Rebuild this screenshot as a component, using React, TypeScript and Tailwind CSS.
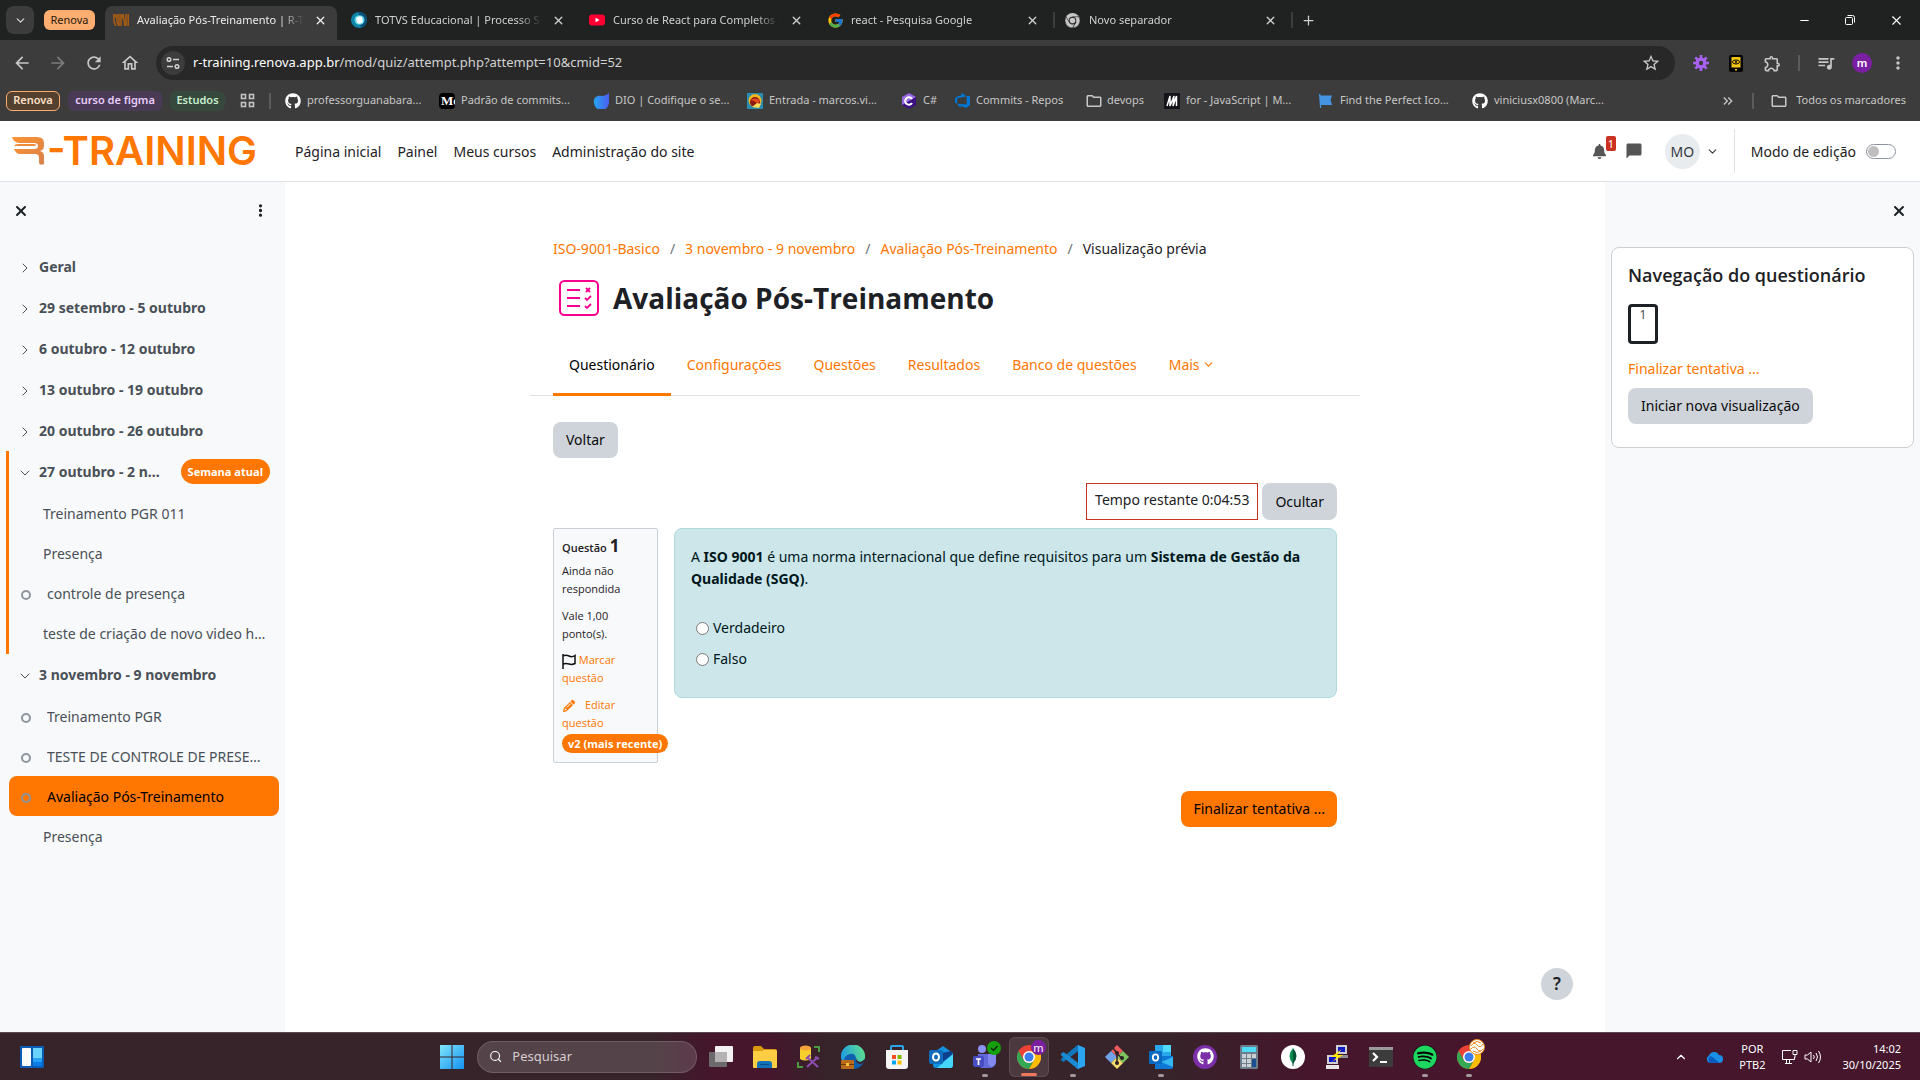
import React from "react";
import { ChevronDown, ChevronRight, X, Plus, Minus, Search } from "lucide-react";
import {
  MdArrowBack,
  MdArrowForward,
  MdRefresh,
  MdOutlineHome,
  MdStarBorder,
  MdOutlineExtension,
  MdQueueMusic,
  MdMoreVert,
  MdChatBubble,
  MdOutlineFolder,
  MdKeyboardDoubleArrowRight,
} from "react-icons/md";
import { FaBell, FaGithub, FaPencil, FaXmark, FaEllipsisVertical, FaSpotify } from "react-icons/fa6";
import { FcGoogle } from "react-icons/fc";
import { VscAzureDevops } from "react-icons/vsc";

/* ---------- Small drawings ---------- */

function ChromeLogo({ size = 24, mono = false }: { size?: number; mono?: boolean }) {
  const c = mono ? ["#c7c7c7", "#c7c7c7", "#c7c7c7"] : ["#ea4335", "#fbbc04", "#34a853"];
  const edge = mono ? "#202220" : "none";
  return (
    <svg width={size} height={size} viewBox="0 0 24 24" aria-hidden="true">
      <circle cx="12" cy="12" r="12" fill={c[0]} />
      <path d="M12 6h10.4A12 12 0 0 1 12 24l5.2-9z" fill={c[1]} stroke={edge} />
      <path d="M1.6 6 6.8 15a6 6 0 0 0 10.4 0L12 24A12 12 0 0 1 1.6 6z" fill={c[2]} stroke={edge} />
      <circle cx="12" cy="12" r="6" fill={mono ? "#202220" : "#fff"} />
      <circle cx="12" cy="12" r="4.5" fill={mono ? "#c7c7c7" : "#3b7ded"} />
    </svg>
  );
}

function TuneIcon() {
  return (
    <svg width="14" height="14" viewBox="0 0 14 14" fill="none" stroke="#d0d0d0" strokeWidth="1.5" aria-hidden="true">
      <circle cx="3" cy="3.5" r="1.8" />
      <path d="M7 3.5h6M1 10.5h6" />
      <circle cx="11" cy="10.5" r="1.8" />
    </svg>
  );
}

function RenovaFavicon() {
  return (
    <svg width="16" height="12" viewBox="0 0 16 12" fill="none" stroke="#a75a12" strokeWidth="1.6" aria-hidden="true">
      <path d="M1 0v8l2 4M4 0v8l2 4V0M8 0v12M10 0l2 12M13 0v12M15.2 0v12M1 0l3 4M8 0l3 6" />
    </svg>
  );
}

function TotvsIcon() {
  return (
    <svg width="16" height="16" viewBox="0 0 16 16" aria-hidden="true">
      <circle cx="8" cy="8" r="8" fill="#0d84a8" />
      <path d="M8 0a8 8 0 0 1 8 8 8 8 0 0 1-5 7.4L8 12z" fill="#0a4f7a" />
      <ellipse cx="8.5" cy="8" rx="5" ry="4.8" fill="#5cd3ea" />
      <path d="M5 6q3-3 6-1l1 5q-3 3-6 1z" fill="#f2fdff" />
    </svg>
  );
}

function YoutubeIcon() {
  return (
    <svg width="16" height="16" viewBox="0 0 16 16" aria-hidden="true">
      <rect x="0" y="2.5" width="16" height="11" rx="3" fill="#ff0033" />
      <path d="M6.5 5.7v4.6l4-2.3z" fill="#fff" />
    </svg>
  );
}

function AppsIcon() {
  return (
    <svg width="15" height="15" viewBox="0 0 15 15" fill="none" stroke="#c7c7c7" strokeWidth="1.6" aria-hidden="true">
      <path d="M1.5 1.5h4v4h-4zM9.5 1.5h4v4h-4zM1.5 9.5h4v4h-4zM9.5 9.5h4v4h-4z" />
    </svg>
  );
}

function MediumIcon() {
  return (
    <span className="flex size-4 items-center overflow-hidden rounded-sm bg-black pl-0.5 font-['Liberation_Serif',serif] text-[13px] font-bold text-white">
      Me
    </span>
  );
}

function DioIcon() {
  return (
    <svg width="16" height="16" viewBox="0 0 16 16" aria-hidden="true">
      <defs>
        <linearGradient id="dio" x1="0" x2="1">
          <stop offset="0" stopColor="#25a5f2" />
          <stop offset="1" stopColor="#4a5ff0" />
        </linearGradient>
      </defs>
      <path d="M16 0v9a7.500 7.500 0 0 1-15 1C0 5 4 2 8 3c3 .5 5-1 8-3z" fill="url(#dio)" />
    </svg>
  );
}

function MailIcon() {
  return (
    <svg width="16" height="16" viewBox="0 0 16 16" aria-hidden="true">
      <rect width="16" height="16" fill="#2b8cae" />
      <circle cx="8" cy="7.5" r="6.5" fill="#f5b51c" />
      <circle cx="8" cy="9" r="5" fill="#8c1c10" />
      <path d="M3 7q5-3 10 0l-2 4-4-3z" fill="#e24a1b" />
      <path d="M5 14l5-4 4 1-2 4z" fill="#f7dc59" />
    </svg>
  );
}

function CSharpIcon() {
  return (
    <svg width="16" height="16" viewBox="0 0 16 16" aria-hidden="true">
      <path d="M8 0l7 4v8l-7 4-7-4V4z" fill="#3a1083" />
      <path d="M8 0l7 4L1 12V4z" fill="#9a6be0" />
      <path d="M11 6a3.700 3.700 0 1 0 0 4" fill="none" stroke="#fff" strokeWidth="2" />
    </svg>
  );
}

function MdnIcon() {
  return (
    <svg width="16" height="16" viewBox="0 0 16 16" aria-hidden="true">
      <rect width="16" height="16" fill="#15141a" />
      <path d="M3 13 6 3v10l4-10-1 10 3.500-10v10" fill="none" stroke="#fff" strokeWidth="1.5" />
    </svg>
  );
}

function FlagFavicon() {
  return (
    <svg width="16" height="16" viewBox="0 0 16 16" aria-hidden="true">
      <path d="M1 1h1.500v1.500H14L12.500 7 14 12H3v3H2z" fill="#4594e4" />
    </svg>
  );
}

function GearExtension() {
  return (
    <svg width="16" height="16" viewBox="0 0 16 16" aria-hidden="true">
      <path d="M8 0v16M0 8h16M2.300 2.300l11.400 11.400M13.700 2.300 2.300 13.700" stroke="#a862f2" strokeWidth="2.6" />
      <circle cx="8" cy="8" r="5.5" fill="#a862f2" />
      <circle cx="8" cy="8" r="2.2" fill="#3c3c3c" />
    </svg>
  );
}

function PhoneExtension() {
  return (
    <svg width="14" height="17" viewBox="0 0 14 17" aria-hidden="true">
      <rect width="14" height="17" rx="2" fill="#000" />
      <rect x="2.5" y="2" width="9" height="10.5" fill="#f3c414" />
      <ellipse cx="7" cy="7" rx="3.5" ry="2" fill="none" stroke="#000" />
      <circle cx="7" cy="7" r="1" />
      <rect x="6" y="14" width="2" height="1.5" fill="#f3c414" />
    </svg>
  );
}

function RMark() {
  return (
    <svg width="33" height="30" viewBox="0 0 33 30" fill="none" aria-hidden="true">
      <defs>
        <linearGradient id="rmark" x1="0" y1="0" x2="1" y2="1">
          <stop offset="0" stopColor="#fd9433" />
          <stop offset="1" stopColor="#d9814a" />
        </linearGradient>
      </defs>
      <path d="M0 1h25q7 0 7 6v3q0 4-4 5 4 1 4 5v8q-5 2-5-2v-4q0-4-4-4H8q-4 0-6-5h20q4 0 4-3t-4-3H8Q2 7 0 1z" fill="url(#rmark)" />
      <path d="M2 10q1-2 4-2h16q2 0 2 1t-2 1z" fill="#f08b38" />
    </svg>
  );
}

function QuizIcon() {
  return (
    <svg width="40" height="36" viewBox="0 0 40 36" fill="none" stroke="#f70090" strokeWidth="2" aria-hidden="true">
      <rect x="1" y="1" width="38" height="34" rx="4.5" />
      <path d="M8 10h13M8 18h13M8 26h13" />
      <path d="M27 8l4 4M31 8l-4 4M26 18l2 2 4-4M26 26l2 2 4-4" strokeWidth="1.8" />
    </svg>
  );
}

function FlagOutline() {
  return (
    <svg className="inline-block" width="14" height="15" viewBox="0 0 14 15" fill="none" stroke="#111" strokeWidth="1.5" aria-hidden="true">
      <path d="M1 0v15M1 2q3-1.500 6 0t6-.5v8q-3 1.500-6 .5t-6 0" />
    </svg>
  );
}

/* ---------- Taskbar drawings ---------- */

const TaskView = () => (
  <svg width="24" height="24" viewBox="0 0 24 24">
    <rect x="6" y="1" width="18" height="16" rx="1" fill="#f2f2f2" />
    <rect x="0" y="7" width="18" height="15" rx="1" fill="#6d6a6b" />
    <path d="M6 7h12v10H6z" fill="#b5b3b4" />
  </svg>
);
const Explorer = () => (
  <svg width="24" height="24" viewBox="0 0 24 24">
    <path d="M0 3q0-2 2-2h6l3 3h11q2 0 2 2v4H0z" fill="#d99a10" />
    <path d="M0 6h9l2-1h12l1 1v16q0 1-1 1H1q-1 0-1-1z" fill="#fdcd43" />
    <path d="M4 23v-4q0-3 3-3h9q3 0 3 3v4z" fill="#1272b8" />
    <path d="M7 19h9v1H7z" fill="#0b4b86" />
  </svg>
);
const SqlTool = () => (
  <svg width="24" height="24" viewBox="0 0 24 24" fill="none">
    <path d="M17 2h5v5M1 17v5h5" stroke="#4c9a3f" strokeWidth="2" />
    <path d="M3 3v11q5 3 11 0V3z" fill="#f6cf2d" />
    <ellipse cx="8.5" cy="3" rx="5.5" ry="2.5" fill="#f5a13b" />
    <path d="M10 12l11 10M21 12 10 22M9 14l4-4M18 12l4 2" stroke="#8a4fb0" strokeWidth="2" />
  </svg>
);
const Edge = () => (
  <svg width="24" height="24" viewBox="0 0 24 24">
    <defs>
      <linearGradient id="edge" x1="0" x2="1" y1="0.5" y2="0.3">
        <stop offset="0" stopColor="#1f9de0" />
        <stop offset="1" stopColor="#5fe08a" />
      </linearGradient>
    </defs>
    <circle cx="12" cy="12" r="12" fill="#0f5fae" />
    <path d="M0 13A12 12 0 0 1 24 10q1 6-5 7-5 0-4-4-1-5-6-4-6 1-6 8-2-1-3-4z" fill="url(#edge)" />
    <path d="M15 13q1 4 5 4l4-3q-1 5-5 5-5-1-4-6z" fill="#37232a" />
    <rect x="0" y="15" width="13" height="9" rx="1" fill="#b96a1a" />
    <path d="M0 19h13v1H0z" fill="#6e3a08" />
    <rect x="5" y="18" width="3" height="3" fill="#f5c33d" />
  </svg>
);
const Store = () => (
  <svg width="24" height="24" viewBox="0 0 24 24">
    <path d="M6 6V2q0-1 1-1h10q1 0 1 1v4" fill="none" stroke="#2aa5ea" strokeWidth="2" />
    <path d="M1 5h22v16q0 3-3 3H4q-3 0-3-3z" fill="#f5f5f5" />
    <path d="M7 10h4v4H7z" fill="#f25022" />
    <path d="M12.500 10h4v4h-4z" fill="#7fba00" />
    <path d="M7 15.500h4v4H7z" fill="#00a4ef" />
    <path d="M12.500 15.500h4v4h-4z" fill="#ffb900" />
  </svg>
);
const OutlookNew = () => (
  <svg width="24" height="24" viewBox="0 0 24 24">
    <path d="M4 8 14 1l10 7v12q0 3-3 3H7q-3 0-3-3z" fill="#1490df" />
    <path d="M8 9 22 6l2 3-12 9z" fill="#0f3f8c" />
    <path d="M24 9v11q0 3-3 3H8z" fill="#45d6fa" />
    <rect x="0" y="5" width="14" height="14" rx="2" fill="#0f6cbd" />
    <ellipse cx="7" cy="12" rx="3" ry="3.5" fill="none" stroke="#fff" strokeWidth="2" />
  </svg>
);
const OutlookOld = () => (
  <svg width="24" height="24" viewBox="0 0 24 24">
    <rect x="6" y="0" width="16" height="14" fill="#28a8ea" />
    <path d="M14 0h8v7h-8z" fill="#50d9ff" />
    <path d="M6 11h18v11q0 2-2 2H6z" fill="#0f78d4" />
    <path d="M24 12v10L12 17z" fill="#35b8f1" />
    <rect x="0" y="6" width="13" height="13" rx="1" fill="#0a6ac2" />
    <ellipse cx="6.5" cy="12.5" rx="2.7" ry="3.2" fill="none" stroke="#fff" strokeWidth="1.8" />
  </svg>
);
const Teams = () => (
  <svg width="24" height="24" viewBox="0 0 24 24">
    <circle cx="9" cy="4" r="4" fill="#8a93f5" />
    <path d="M5 9h17v9q0 5-6 5H9q-4-1-4-5z" fill="#6269d8" />
    <path d="M15 9h8v8q0 4-5 5-3-2-3-5z" fill="#8288f0" />
    <rect x="0" y="11" width="11" height="11" rx="2" fill="#474cc0" />
    <path d="M3 14h5M5.500 14v6" stroke="#fff" strokeWidth="1.7" />
  </svg>
);
const VsCode = () => (
  <svg width="24" height="24" viewBox="0 0 24 24">
    <path d="M18 5.500 2.500 17 0 15.200v-1.500L16.500 0 18 .5z" fill="#1177bd" />
    <path d="M18 18.500 2.500 7 0 8.800v1.500L16.500 24l1.500-.5z" fill="#1a8ad4" />
    <path d="M17 0l7 3v18l-7 3z" fill="#2ba5f0" />
  </svg>
);
const Git = () => (
  <svg width="24" height="24" viewBox="0 0 24 24">
    <path d="M12 0l6 6-6 6-6-6z" fill="#f05b5b" />
    <path d="M18 6l6 6-6 6-6-6z" fill="#7ec45c" />
    <path d="M6 6l6 6-6 6-6-6z" fill="#6fa2e8" />
    <path d="M12 12l6 6-6 6-6-6z" fill="#f6dc6b" />
    <path d="M8 3l4 5v9M12 9l5 4" fill="none" stroke="#2b2025" strokeWidth="1.5" />
    <circle cx="12" cy="8" r="2" fill="#2b2025" />
    <circle cx="12" cy="18" r="2" fill="#2b2025" />
    <circle cx="17" cy="13" r="2" fill="#2b2025" />
  </svg>
);
const GithubDesktop = () => (
  <span className="flex size-6 items-center justify-center rounded-full bg-[#7b2fa8]">
    <FaGithub size={17} color="#fff" />
  </span>
);
const Calculator = () => (
  <svg width="24" height="24" viewBox="0 0 24 24">
    <rect x="3" y="0" width="18" height="24" rx="1.5" fill="#6d7d89" />
    <rect x="5" y="2" width="14" height="5" fill="#50dcf7" />
    <path d="M5 9h4v4H5zM10 9h4v4h-4zM15 9h4v4h-4zM5 14h4v4H5zM10 14h4v4h-4zM5 19h4v3H5zM10 19h4v3h-4z" fill="#c9d0d6" />
    <path d="M15 14h4v8h-4z" fill="#1b4f8f" />
  </svg>
);
const Mongo = () => (
  <svg width="24" height="24" viewBox="0 0 24 24">
    <circle cx="12" cy="12" r="12" fill="#fff" />
    <path d="M12 3q-7 8 0 16z" fill="#0b8a4f" />
    <path d="M12 3q7 8 0 16z" fill="#05543a" />
    <path d="M12 17v4" stroke="#05543a" />
  </svg>
);
const Putty = () => (
  <svg width="24" height="24" viewBox="0 0 24 24">
    <rect x="11" y="0" width="11" height="9" fill="#cfcfcf" />
    <rect x="13" y="2" width="7" height="5" fill="#1119c9" />
    <path d="M10 10h13v3H10z" fill="#8e8e8e" />
    <rect x="2" y="10" width="11" height="9" fill="#cfcfcf" />
    <rect x="4" y="12" width="7" height="5" fill="#1119c9" />
    <path d="M1 20h13v4H1z" fill="#e5e5e5" />
    <path d="M17 4 6 12l6 0-5 5 11-7h-6z" fill="#ffe900" />
  </svg>
);
const Terminal = () => (
  <svg width="24" height="24" viewBox="0 0 24 24">
    <rect x="0" y="2" width="24" height="20" rx="1.5" fill="#3c3c3c" />
    <path d="M0 2h24v3H0z" fill="#9a9a9a" />
    <path d="M4 8l4 4-4 4" fill="none" stroke="#fff" strokeWidth="2.2" />
    <path d="M11 17h7" stroke="#fff" strokeWidth="2" />
  </svg>
);
const Spotify = () => (
  <span className="flex size-6 items-center justify-center rounded-full bg-black">
    <FaSpotify size={24} color="#1ed760" />
  </span>
);
const StartLogo = () => (
  <svg width="24" height="24" viewBox="0 0 24 24">
    <defs>
      <linearGradient id="start" x1="0" y1="0" x2="1" y2="1">
        <stop offset="0" stopColor="#7fe6fb" />
        <stop offset="1" stopColor="#1391f0" />
      </linearGradient>
    </defs>
    <path d="M0 0h11.500v11.500H0zM12.500 0H24v11.500H12.500zM0 12.500h11.500V24H0zM12.500 12.500H24V24H12.500z" fill="url(#start)" />
  </svg>
);
const Widgets = () => (
  <svg width="24" height="22" viewBox="0 0 24 22">
    <rect width="24" height="22" rx="1" fill="#0a5cb5" />
    <rect x="2" y="2" width="9" height="18" rx="1" fill="#fafafa" />
    <rect x="13" y="2" width="9" height="10" fill="#69d3fb" />
    <rect x="13" y="12" width="9" height="4" fill="#26a0f5" />
    <rect x="13" y="16" width="9" height="4" fill="#0b7be6" />
  </svg>
);

/* ---------- Browser ---------- */

const tabs = [
  { title: "TOTVS Educacional | Processo Sel", icon: <TotvsIcon /> },
  { title: "Curso de React para Completos In", icon: <YoutubeIcon /> },
  { title: "react - Pesquisa Google", icon: <FcGoogle size={17} /> },
  { title: "Novo separador", icon: <ChromeLogo size={15} mono /> },
];

const fade = "[mask-image:linear-gradient(to_right,black_85%,transparent)]";

function TabStrip() {
  return (
    <div className="flex h-10 items-center bg-[#1f2220] pl-1.5 text-[#d0d0d0]">
      <button aria-label="Pesquisar separadores" className="flex size-7 items-center justify-center rounded-lg bg-[#3c3c3c]">
        <ChevronDown size={13} strokeWidth={2.5} />
      </button>
      <button className="ml-2.5 h-5 w-[51px] rounded-md bg-[#fcad70] text-[#2a1a0c]">Renova</button>
      <div className="mr-1 ml-2.5 flex h-[34px] w-[232px] items-center self-end rounded-t-lg bg-[#3c3c3c] pr-2.5 pb-1.5 pl-2 text-[#ececec]">
        <RenovaFavicon />
        <span className={`ml-2 flex-1 overflow-hidden whitespace-nowrap ${fade}`}>Avaliação Pós-Treinamento | R-Training</span>
        <button aria-label="Fechar" className="ml-2.5">
          <X size={13} strokeWidth={2.5} />
        </button>
      </div>
      {tabs.map((t) => (
        <div key={t.title} className="flex w-[238px] shrink-0 items-center">
          <div className="flex w-full items-center pr-3.5 pl-2.5">
            <span className="w-4">{t.icon}</span>
            <span className={`ml-2 flex-1 overflow-hidden whitespace-nowrap ${fade}`}>{t.title}</span>
            <button aria-label="Fechar" className="ml-2.5">
              <X size={13} strokeWidth={2.5} />
            </button>
          </div>
          <span className="h-4 w-0.5 bg-[#3c3e3d]" />
        </div>
      ))}
      <button aria-label="Novo separador" className="ml-2">
        <Plus size={15} />
      </button>
      <div className="mr-4 ml-auto flex items-center gap-[33px] text-white">
        <button aria-label="Minimizar"><Minus size={13} strokeWidth={2} /></button>
        <button aria-label="Restaurar">
          <svg width="12" height="12" viewBox="0 0 12 12" fill="none" stroke="currentColor">
            <rect x="1.5" y="3.5" width="7" height="7" rx="1" />
            <path d="M3.500 1.500h5q2 0 2 2v5" />
          </svg>
        </button>
        <button aria-label="Fechar janela"><X size={15} strokeWidth={1.8} /></button>
      </div>
    </div>
  );
}

function Toolbar() {
  return (
    <div className="flex h-[46px] items-center pr-3 pl-3 text-[#c7c7c7]">
      <div className="flex gap-4">
        <button aria-label="Voltar"><MdArrowBack size={20} /></button>
        <button aria-label="Avançar" className="text-[#7c7c7c]"><MdArrowForward size={20} /></button>
        <button aria-label="Recarregar"><MdRefresh size={20} /></button>
        <button aria-label="Início"><MdOutlineHome size={20} /></button>
      </div>
      <div className="ml-4 flex h-[34px] flex-1 items-center rounded-full bg-[#282828] pr-3.5 pl-[5px]">
        <span className="flex size-6 items-center justify-center rounded-full bg-[#3c3c3c]"><TuneIcon /></span>
        <span className="ml-2 flex-1 text-[13px] text-[#d2d2d2]">
          <span className="text-white">r-training.renova.app.br</span>/mod/quiz/attempt.php?attempt=10&amp;cmid=52
        </span>
        <button aria-label="Favorito"><MdStarBorder size={20} /></button>
      </div>
      <div className="ml-[18px] flex items-center">
        <GearExtension />
        <span className="ml-5"><PhoneExtension /></span>
        <MdOutlineExtension size={19} className="ml-5" />
        <span className="ml-4 h-4 w-0.5 bg-[#5c5c5c]" />
        <MdQueueMusic size={20} className="ml-4" />
        <span className="ml-4 flex size-5 items-center justify-center rounded-full bg-[#7b1fa2] font-semibold text-white">m</span>
        <button aria-label="Menu" className="ml-4"><MdMoreVert size={20} /></button>
      </div>
    </div>
  );
}

const bookmarks = [
  { label: "professorguanabara...", icon: <FaGithub size={16} color="#fff" />, w: "w-[154px]" },
  { label: "Padrão de commits...", icon: <MediumIcon />, w: "w-[154px]" },
  { label: "DIO | Codifique o se...", icon: <DioIcon />, w: "w-[154px]" },
  { label: "Entrada - marcos.vi...", icon: <MailIcon />, w: "w-[154px]" },
  { label: "C#", icon: <CSharpIcon />, w: "w-[53px]" },
  { label: "Commits - Repos", icon: <VscAzureDevops size={17} color="#0078d7" />, w: "w-[131px]" },
  { label: "devops", icon: <MdOutlineFolder size={18} />, w: "w-[79px]" },
  { label: "for - JavaScript | M...", icon: <MdnIcon />, w: "w-[154px]" },
  { label: "Find the Perfect Ico...", icon: <FlagFavicon />, w: "w-[154px]" },
  { label: "viniciusx0800 (Marc...", icon: <FaGithub size={16} color="#fff" />, w: "w-[154px]" },
];

function BookmarksBar() {
  return (
    <div className="flex h-[35px] items-center pr-3.5 pb-1.5 pl-1.5 whitespace-nowrap text-[#c7c7c7]">
      <button className="h-5 w-[54px] rounded-md border border-[#fcad70] bg-[#54402f] font-semibold text-[#ffe0c8]">Renova</button>
      <button className="ml-2 h-5 w-[94px] rounded-md bg-[#493a55] font-semibold text-[#e9cdfc]">curso de figma</button>
      <button className="ml-2 h-5 w-[55px] rounded-md bg-[#37483c] font-semibold text-[#c8f0d0]">Estudos</button>
      <span className="ml-[15px]"><AppsIcon /></span>
      <span className="mr-3.5 ml-[14px] h-4 w-0.5 bg-[#5c5c5c]" />
      {bookmarks.map((b) => (
        <a key={b.label} href="#" className={`flex items-center ${b.w}`}>
          <span className="flex w-[22px]">{b.icon}</span>
          {b.label}
        </a>
      ))}
      <button aria-label="Mais favoritos" className="ml-auto"><MdKeyboardDoubleArrowRight size={16} /></button>
      <span className="mx-4 h-4 w-0.5 bg-[#5c5c5c]" />
      <a href="#" className="flex items-center">
        <MdOutlineFolder size={18} className="mr-2" />
        Todos os marcadores
      </a>
    </div>
  );
}

/* ---------- Site ---------- */

function SiteHeader() {
  return (
    <header className="flex h-[61px] items-center border-b border-[#dee2e6] bg-white pr-6 pl-3 text-[#1d2125]">
      <a href="#" aria-label="R-Training" className="flex w-[283px] shrink-0 items-center whitespace-nowrap text-[#ff7600]">
        <RMark />
        <span className="ml-0.5 font-[Inter,sans-serif] text-[40px] leading-none font-semibold">-TRAINING</span>
      </a>
      <nav className="flex flex-1 gap-4">
        <a href="#">Página inicial</a>
        <a href="#">Painel</a>
        <a href="#">Meus cursos</a>
        <a href="#">Administração do site</a>
      </nav>
      <div className="flex shrink-0 items-center">
        <button aria-label="Notificações" className="relative text-[#555]">
          <FaBell size={15} />
          <span className="absolute -top-2 left-3.5 rounded-xs bg-[#ca3120] px-0.5 text-[11px] leading-[15px] text-white">1</span>
        </button>
        <button aria-label="Mensagens" className="ml-[18px] text-[#555]"><MdChatBubble size={18} /></button>
        <button className="ml-[22px] flex items-center gap-1.5 text-[#343a40]">
          <span className="flex size-[35px] items-center justify-center rounded-full bg-[#e9ecef]">MO</span>
          <ChevronDown size={13} />
        </button>
        <label className="ml-[15px] flex h-11 items-center gap-2.5 border-l border-[#dee2e6] pl-4">
          Modo de edição
          <span className="relative flex">
            <input type="checkbox" className="h-[15px] w-[30px] appearance-none rounded-full border border-[#8f959e] bg-white" />
            <span className="pointer-events-none absolute top-[2px] left-[2px] size-[11px] rounded-full bg-[#bfbfbf]" />
          </span>
        </label>
      </div>
    </header>
  );
}

function SectionRow({ title, open, badge }: { title: string; open?: boolean; badge?: string }) {
  return (
    <div className="flex h-[41px] items-center pr-[15px] pl-[17px] font-bold">
      <button aria-label={title} className="w-[22px] shrink-0 pt-0.5">
        {open ? <ChevronDown size={16} strokeWidth={1.5} /> : <ChevronRight size={16} strokeWidth={1.5} />}
      </button>
      <a href="#" className="truncate">{title}</a>
      {badge && (
        <span className="ml-3.5 shrink-0 rounded-full bg-[#ff7600] px-[7px] font-['Open_Sans',sans-serif] text-[11px] leading-[25px] text-white">{badge}</span>
      )}
    </div>
  );
}

function ActivityRow({ title, dot, active }: { title: string; dot?: boolean; active?: boolean }) {
  return (
    <a
      href="#"
      className={`mr-1.5 ml-[9px] flex h-10 items-center rounded-lg pr-3 pl-3 ${active ? "bg-[#ff7600] text-black" : ""}`}
    >
      {dot && <span className="mt-1 mr-4 size-2.5 shrink-0 rounded-full border-2 border-[#8f959e]" />}
      <span className={dot ? "truncate" : "truncate pl-[22px]"}>{title}</span>
    </a>
  );
}

function CourseIndex() {
  return (
    <aside className="w-[285px] shrink-0 bg-[#f8f9fa] text-[#495057]">
      <div className="flex h-16 items-start justify-between px-[13px] pt-[21px] text-[#1d2125]">
        <button aria-label="Fechar índice"><FaXmark size={16} /></button>
        <button aria-label="Opções" className="mr-1"><FaEllipsisVertical size={15} /></button>
      </div>
      <SectionRow title="Geral" />
      <SectionRow title="29 setembro - 5 outubro" />
      <SectionRow title="6 outubro - 12 outubro" />
      <SectionRow title="13 outubro - 19 outubro" />
      <SectionRow title="20 outubro - 26 outubro" />
      <div className="ml-1.5 border-l-3 border-[#ff7600]">
        <div className="-ml-[9px] pb-px">
          <SectionRow title="27 outubro - 2 novembro" open badge="Semana atual" />
          <div className="pt-px">
            <ActivityRow title="Treinamento PGR 011" />
            <ActivityRow title="Presença" />
            <ActivityRow title="controle de presença" dot />
            <ActivityRow title="teste de criação de novo video hoje" />
          </div>
        </div>
      </div>
      <SectionRow title="3 novembro - 9 novembro" open />
      <div className="py-px">
        <ActivityRow title="Treinamento PGR" dot />
        <ActivityRow title="TESTE DE CONTROLE DE PRESENÇA" dot />
        <ActivityRow title="Avaliação Pós-Treinamento" dot active />
        <ActivityRow title="Presença" />
      </div>
    </aside>
  );
}

const grayButton = "rounded-lg bg-[#ced4da] px-[13px] leading-9 text-[#0a0a0a]";

function QuestionInfo() {
  return (
    <section className="h-[235px] w-[105px] shrink-0 rounded-xs border border-[#cad0d7] bg-[#f8f9fa] px-2 pt-[7px] font-['Open_Sans',sans-serif] text-[11px] leading-[18px] whitespace-nowrap text-[#1d2125]">
      <h3 className="font-semibold leading-5">
        Questão <span className="text-[17px] font-bold">1</span>
      </h3>
      <p className="mt-1">Ainda não<br />respondida</p>
      <p className="mt-[9px]">Vale 1,00<br />ponto(s).</p>
      <a href="#" className="mt-2 block text-[#ff7600]">
        <FlagOutline /> Marcar<br />questão
      </a>
      <a href="#" className="mt-[9px] block text-[#ff7600]">
        <FaPencil size={12} className="mr-2.5 ml-px inline-block" />Editar<br />questão
      </a>
      <span className="mt-0.5 inline-block rounded-full bg-[#ff7600] px-1.5 leading-[19px] font-bold text-white">v2 (mais recente)</span>
    </section>
  );
}

function QuizPage() {
  const crumbs = ["ISO-9001-Basico", "3 novembro - 9 novembro", "Avaliação Pós-Treinamento"];
  const links = ["Configurações", "Questões", "Resultados", "Banco de questões"];
  return (
    <main className="relative flex-1 bg-white text-[#1d2125]">
      <div className="mx-auto max-w-[830px] pt-14">
        <nav className="flex gap-2.5 px-[23px] leading-[22px]">
          {crumbs.map((c) => (
            <React.Fragment key={c}>
              <a href="#" className="text-[#ff7600]">{c}</a>
              <span className="text-[#6a737b]">/</span>
            </React.Fragment>
          ))}
          <span>Visualização prévia</span>
        </nav>
        <div className="mt-[18px] flex h-10 items-center gap-3.5 px-[29px]">
          <QuizIcon />
          <h1 className="font-['Open_Sans',sans-serif] text-[28px] font-bold">Avaliação Pós-Treinamento</h1>
        </div>
        <nav className="mt-[14px] flex h-[64px] border-b border-[#dee2e6] px-[23px] text-[#ff7600]">
          <a href="#" className="-mb-px border-b-3 border-[#ff7600] px-4 pt-[22px] text-black">Questionário</a>
          {links.map((l) => (
            <a key={l} href="#" className="px-4 pt-[22px]">{l}</a>
          ))}
          <button className="flex items-center gap-0.5 self-start px-4 pt-[22px]">
            Mais <ChevronDown size={13} />
          </button>
        </nav>
        <div className="px-[23px] pt-[26px]">
          <button className={grayButton}>Voltar</button>
          <div className="mt-[25px] flex justify-end gap-1">
            <div className="border border-[#ca3120] px-2 pt-[5px] pb-2 leading-[22px]">Tempo restante 0:04:53</div>
            <button className={grayButton}>Ocultar</button>
          </div>
          <div className="mt-2 flex items-start gap-4">
            <QuestionInfo />
            <section className="h-[170px] flex-1 rounded-lg border border-[#b0dade] bg-[#cce6ea] px-4 pt-[17px] text-[#00171b]">
              <p className="leading-[22px]">
                A <b>ISO 9001</b> é uma norma internacional que define requisitos para um <b>Sistema de Gestão da Qualidade (SGQ)</b>.
              </p>
              <div className="mt-[27px] flex flex-col gap-[9px] pl-[5px] leading-[22px]">
                <label className="flex items-center gap-1">
                  <input type="radio" name="answer" className="size-[13px]" />
                  Verdadeiro
                </label>
                <label className="flex items-center gap-1">
                  <input type="radio" name="answer" className="size-[13px]" />
                  Falso
                </label>
              </div>
            </section>
          </div>
          <div className="mt-7 flex justify-end">
            <button className="rounded-lg bg-[#ff7600] px-3 leading-9 text-black">Finalizar tentativa ...</button>
          </div>
        </div>
      </div>
      <button className="absolute right-8 bottom-8 size-8 rounded-full bg-[#ced4da] text-[17px] font-semibold">?</button>
    </main>
  );
}

function QuizNavigation() {
  return (
    <aside className="w-[315px] shrink-0 bg-[#f8f9fa] px-1.5 text-[#1d2125]">
      <div className="flex h-[65px] items-start justify-end pt-[21px] pr-[7px]">
        <button aria-label="Fechar gaveta"><FaXmark size={16} /></button>
      </div>
      <section className="flex h-[201px] flex-col items-start rounded-lg border border-[#cdd0d3] bg-white px-4 pt-4">
        <h2 className="font-['Open_Sans',sans-serif] text-[18px] leading-[22px] font-semibold">Navegação do questionário</h2>
        <a href="#" className="mt-[18px] h-10 w-[30px] rounded-sm border-3 border-[#1d2125] text-center text-[12px] leading-4 text-[#495057]">1</a>
        <a href="#" className="mt-3.5 leading-[22px] text-[#ff7600]">Finalizar tentativa ...</a>
        <button className={`mt-2 ${grayButton}`}>Iniciar nova visualização</button>
      </section>
    </aside>
  );
}

/* ---------- Taskbar ---------- */

const apps = [
  { name: "Visão de tarefas", icon: <TaskView /> },
  { name: "Explorador", icon: <Explorer /> },
  { name: "SQL", icon: <SqlTool /> },
  { name: "Edge", icon: <Edge /> },
  { name: "Store", icon: <Store /> },
  { name: "Outlook", icon: <OutlookNew /> },
  { name: "Teams", icon: <Teams />, running: true, badge: "check" },
  { name: "Chrome", icon: <ChromeLogo />, active: true, badge: "m" },
  { name: "VS Code", icon: <VsCode />, running: true },
  { name: "Git", icon: <Git /> },
  { name: "Outlook clássico", icon: <OutlookOld />, running: true },
  { name: "GitHub Desktop", icon: <GithubDesktop /> },
  { name: "Calculadora", icon: <Calculator /> },
  { name: "MongoDB Compass", icon: <Mongo /> },
  { name: "PuTTY", icon: <Putty /> },
  { name: "Terminal", icon: <Terminal /> },
  { name: "Spotify", icon: <Spotify />, running: true },
  { name: "Chrome perfil 2", icon: <ChromeLogo />, running: true, badge: "ring" },
];

function Badge({ kind }: { kind: string }) {
  if (kind === "check")
    return (
      <svg className="absolute top-1 left-[22px]" width="14" height="14" viewBox="0 0 14 14">
        <circle cx="7" cy="7" r="7" fill="#13a10e" />
        <path d="M4 7l2.500 2.500L10.500 5" fill="none" stroke="#0c2a0b" strokeWidth="1.5" />
      </svg>
    );
  if (kind === "m")
    return (
      <span className="absolute top-0.5 left-[21px] flex size-[15px] items-center justify-center rounded-full bg-[#7b1fa2] text-[11px] leading-none text-white">m</span>
    );
  return (
    <svg className="absolute top-0.5 left-[20px]" width="16" height="16" viewBox="0 0 16 16" fill="none" stroke="#f08a1c">
      <circle cx="8" cy="8" r="7.5" fill="#fff" />
      <path d="M2 7q3-5 6-1t6-1M2 10q3-4 6 0t6 0M4 4q4-3 8 0M4 12q4 3 8 0" />
    </svg>
  );
}

function Taskbar() {
  return (
    <footer className="flex h-12 items-center border-t border-[#5a4a50] bg-[linear-gradient(to_right,#37232a_0%,#37232a_34%,#45162c_37%,#45162c_40%,#37232a_43%,#37232a_61%,#45162c_68%,#45162c_100%)] text-white">
      <div className="flex flex-1 pl-5">
        <button aria-label="Widgets"><Widgets /></button>
      </div>
      <div className="flex items-center pl-2.5">
        <button aria-label="Iniciar"><StartLogo /></button>
        <label className="mr-0.5 ml-[13px] flex h-8 w-[220px] items-center gap-2.5 rounded-full border border-white/15 bg-white/15 pl-[11px]">
          <Search size={15} aria-hidden="true" />
          <input aria-label="Pesquisar" placeholder="Pesquisar" className="w-full bg-transparent text-[13px] outline-none placeholder:text-[#d6ccd0]" />
        </label>
        {apps.map((a) => (
          <button
            key={a.name}
            aria-label={a.name}
            className={`relative mx-0.5 flex h-10 w-10 items-center justify-center rounded-md ${a.active ? "border border-white/10 bg-white/10" : ""}`}
          >
            {a.icon}
            {a.badge && <Badge kind={a.badge} />}
            {a.active && <span className="absolute bottom-0 h-[3px] w-4 rounded-full bg-[#f0775a]" />}
            {a.running && <span className="absolute bottom-0 h-[3px] w-1.5 rounded-full bg-[#a3989c]" />}
          </button>
        ))}
      </div>
      <div className="flex flex-1 items-center justify-end pr-[19px] text-[11px] leading-4">
        <ChevronDown size={14} className="rotate-180" />
        <svg className="ml-4.5" width="17" height="12" viewBox="0 0 17 12">
          <path d="M4 12a4 4 0 0 1-1-7.500A5.500 5.500 0 0 1 13 4a4 4 0 0 1 0 8z" fill="#1a8fe8" />
          <path d="M4 12a4 4 0 0 1 1-7l9 7z" fill="#0a5cc0" />
        </svg>
        <span className="ml-4 text-center">POR<br />PTB2</span>
        <svg className="ml-4" width="17" height="16" viewBox="0 0 17 16" fill="none" stroke="#fff">
          <path d="M10 1.500H1.500v9h12V8M4 14.500h7M5.500 11v3M8.500 11v3M12 1.500h4v4h-4zM14 5.500v3" />
        </svg>
        <svg className="ml-1.5" width="18" height="16" viewBox="0 0 18 16" fill="none" stroke="#fff">
          <path d="M1 6v4h2.500L7 13V3L3.500 6zM9.500 6q1.500 2 0 4M12 4q3 4 0 8M14.500 2q4 6 0 12" />
        </svg>
        <span className="ml-5 text-right">14:02<br />30/10/2025</span>
      </div>
    </footer>
  );
}

export default function App() {
  return (
    <div className="flex min-h-screen flex-col font-['Noto_Sans',sans-serif] text-[14px]">
      <div className="bg-[#3c3c3c] text-[11px]">
        <TabStrip />
        <Toolbar />
        <BookmarksBar />
      </div>
      <SiteHeader />
      <div className="flex flex-1">
        <CourseIndex />
        <QuizPage />
        <QuizNavigation />
      </div>
      <Taskbar />
    </div>
  );
}
